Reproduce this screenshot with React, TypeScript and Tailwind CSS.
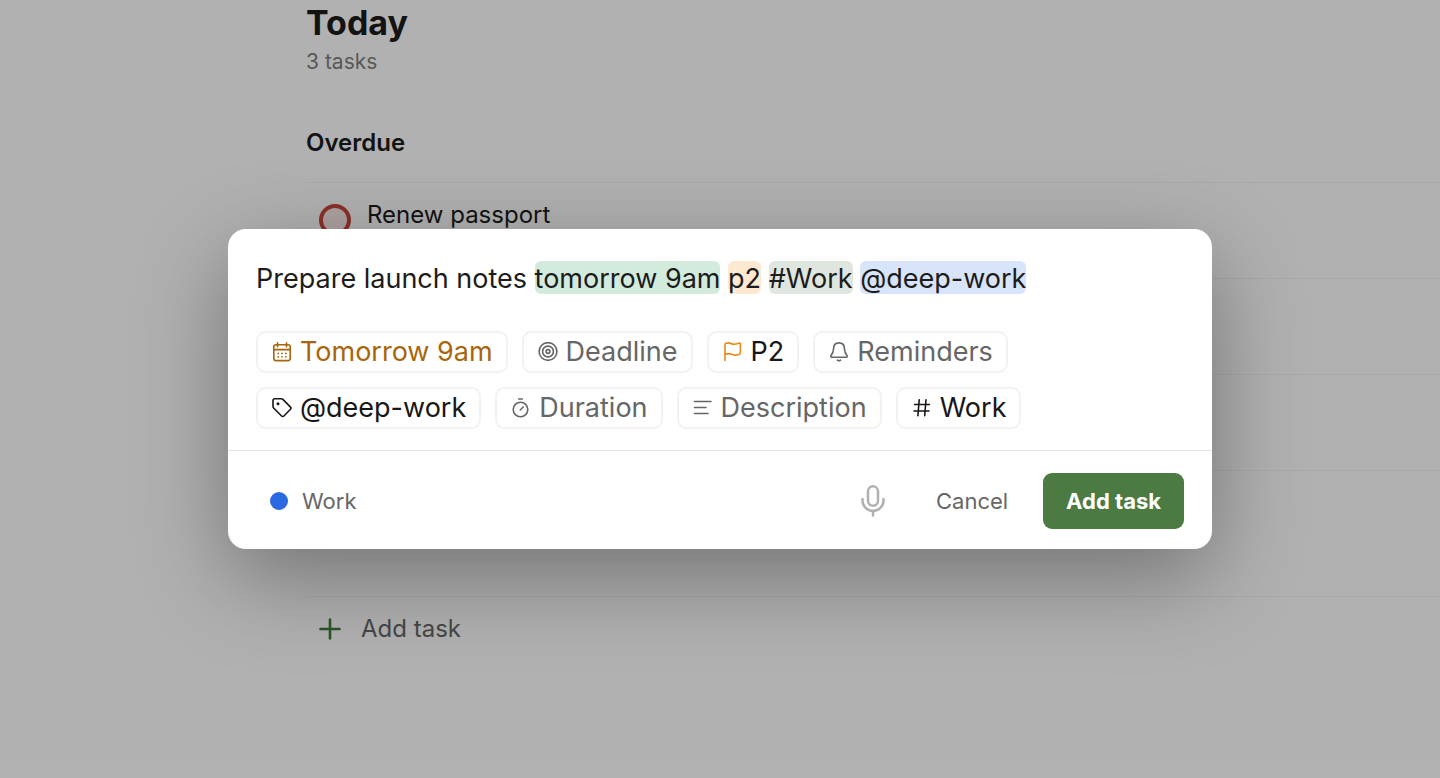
import { useState } from "react"
import type { ReactNode } from "react"
import clsx from "clsx"

type Token = { text: string; mark?: string }

const TOKENS: Token[] = [
  { text: "Prepare launch notes " },
  { text: "tomorrow 9am", mark: "bg-[#d3ebdc]" },
  { text: " " },
  { text: "p2", mark: "bg-[#fde9d2]" },
  { text: " " },
  { text: "#Work", mark: "bg-[#dfe6df]" },
  { text: " " },
  { text: "@deep-work", mark: "bg-[#d8e4fa]" },
]

const ROWS = [
  { title: "Renew passport", height: "h-24" },
  { title: "", height: "h-24" },
  { title: "", height: "h-24" },
  { title: "", height: "h-[126px]" },
]

export default function App() {
  return (
    <div className="relative min-h-screen overflow-hidden bg-[#fefefe] font-['Inter',sans-serif] text-[#1c1c1c]">
      <TodayList />
      <div className="absolute inset-0 flex items-center justify-center bg-black/30 px-8">
        <QuickAdd />
      </div>
    </div>
  )
}

function TodayList() {
  return (
    <main className="pl-[306px]">
      <h1 className="pt-0.5 text-[34px] leading-[42px] font-bold">Today</h1>
      <p className="mt-0.5 text-[21px] leading-8 text-[#808080]">3 tasks</p>
      <h2 className="mt-12 text-[24px] leading-[34px] font-semibold">Overdue</h2>
      <ul className="mt-[22px] border-t border-[#f2f2f2]">
        {ROWS.map((row, i) => (
          <li key={i} className={clsx("flex items-start gap-4 border-b border-[#f2f2f2] pt-4 pl-[13px]", row.height)}>
            {row.title && (
              <>
                <input type="checkbox" aria-label={row.title} className="mt-[5px] size-8 shrink-0 appearance-none rounded-full border-4 border-[#c9453c] bg-[#f9e8e7]" />
                <span className="text-[24px] leading-8">{row.title}</span>
              </>
            )}
          </li>
        ))}
      </ul>
      <button className="mt-4 flex items-center gap-5 pl-[13px] text-[24px] leading-8 text-[#666666]">
        <svg className="size-[22px] text-[#3f7a3a]" viewBox="0 0 22 22" fill="none" stroke="currentColor" strokeWidth="2.6" strokeLinecap="round">
          <path d="M11 1.5v19M1.5 11h19" />
        </svg>
        Add task
      </button>
    </main>
  )
}

function QuickAdd() {
  const [value, setValue] = useState(TOKENS.map((t) => t.text).join(""))
  const untouched = value === TOKENS.map((t) => t.text).join("")

  return (
    <form
      role="dialog"
      aria-label="Add task"
      onSubmit={(e) => e.preventDefault()}
      className="w-full max-w-[984px] rounded-[18px] bg-white shadow-[0_28px_90px_rgba(0,0,0,0.35)]"
    >
      <div className="px-7 pt-7 pb-[21px]">
        {/* the marks sit behind the input, with the same metrics */}
        <div className="relative h-[42px] text-[27px] leading-[42px]">
          <div aria-hidden="true" className="whitespace-pre text-transparent">
            {untouched && TOKENS.map((t, i) => <span key={i} className={clsx("rounded-[6px]", t.mark)}>{t.text}</span>)}
          </div>
          <input
            aria-label="Task name"
            value={value}
            onChange={(e) => setValue(e.target.value)}
            className="absolute inset-0 h-full w-full bg-transparent outline-none"
          />
        </div>

        <div className="mt-8 flex flex-wrap gap-3.5">
          <Chip label="Tomorrow 9am" tone="text-[#a9650b]"><CalendarIcon /></Chip>
          <Chip label="Deadline" tone="text-[#666666]"><TargetIcon /></Chip>
          <Chip label="P2" tone="text-[#171717]"><FlagIcon /></Chip>
          <Chip label="Reminders" tone="text-[#666666]"><BellIcon /></Chip>
          <Chip label="@deep-work" tone="text-[#171717]"><TagIcon /></Chip>
          <Chip label="Duration" tone="text-[#666666]"><TimerIcon /></Chip>
          <Chip label="Description" tone="text-[#666666]"><LinesIcon /></Chip>
          <Chip label="Work" tone="text-[#171717]"><HashIcon /></Chip>
        </div>
      </div>

      <div className="flex items-center border-t border-[#e4e4e4] px-7 pt-[22px] pb-5 text-[22px] leading-8">
        <button type="button" className="flex items-center gap-3.5 px-3.5 text-[#666666]">
          <span className="size-[18px] rounded-full bg-[#2b69e0]" />
          Work
        </button>
        <button type="button" aria-label="Dictate" className="ml-auto text-[#b0b0b0]">
          <svg className="h-8 w-6" viewBox="0 0 24 32" fill="none" stroke="currentColor" strokeWidth="2.5" strokeLinecap="round">
            <rect x="7" y="1.3" width="10" height="19.5" rx="5" />
            <path d="M1.5 14v1.500a10.500 10.300 0 0 0 21 0V14M12 26v4.600" />
          </svg>
        </button>
        <button type="button" className="ml-[51px] text-[#666666]">Cancel</button>
        <button type="submit" className="ml-[35px] h-14 rounded-[9px] bg-[#4c7a43] px-[23px] font-bold text-white">Add task</button>
      </div>
    </form>
  )
}

function Chip({ label, tone, children }: { label: string; tone: string; children: ReactNode }) {
  return (
    <button type="button" className={clsx("flex h-[42px] items-center gap-2 rounded-[9px] border-2 border-[#f2f2f2] pr-[13px] pl-3.5 text-[27px] leading-8", tone)}>
      {children}
      {label}
    </button>
  )
}

function Icon({ children, className }: { children: ReactNode; className?: string }) {
  return (
    <svg className={clsx("size-5 shrink-0", className)} viewBox="0 0 20 20" fill="none" stroke="currentColor" strokeWidth="1.6" strokeLinecap="round" strokeLinejoin="round">
      {children}
    </svg>
  )
}

function CalendarIcon() {
  return (
    <Icon>
      <rect x="1.8" y="2.8" width="16.4" height="15.8" rx="2" />
      <path d="M1.8 7.6h16.400M5.500.8v4M14.500.8v4" />
      <path d="M6.200 11.400h.01M10 11.400h.01M13.800 11.400h.01M6.200 14.800h.01M10 14.800h.01M13.800 14.800h.01" strokeWidth="1.8" />
    </Icon>
  )
}

function TargetIcon() {
  return (
    <Icon>
      <circle cx="10" cy="9.5" r="8.9" />
      <circle cx="10" cy="9.5" r="5.4" />
      <circle cx="10" cy="9.5" r="1.900" />
    </Icon>
  )
}

function FlagIcon() {
  return (
    <Icon className="text-[#e88a12]">
      <path d="M2 18.500V2.400C2.300 1.300 4 .9 5.600.9c1.800 0 2.900 1.400 5.400 1.400 2 0 3.300-.5 4.900-1.100.9-.3 1.500 0 1.500.8v8.700c0 .8-.3 1.200-1 1.500-1.600.6-3.200 1-5 .9-2.300-.1-3.700-1.600-6-1.500-1.300 0-2.400.2-3.400.7" />
    </Icon>
  )
}

function BellIcon() {
  return (
    <Icon>
      <path d="M10 .9C6.600.9 4.700 3.300 4.600 6.500c-.1 3.500-.8 5-2.500 6.900-.7.9-.3 1.800.8 1.800h14.200c1.100 0 1.500-.9.800-1.800-1.700-1.900-2.400-3.400-2.500-6.900C15.300 3.300 13.400.9 10 .9Z" />
      <path d="M8.400 18.200c.9.7 2.300.7 3.200 0" />
    </Icon>
  )
}

function TagIcon() {
  return (
    <Icon>
      <path d="M1 2.600C1 1.500 1.700.8 2.800.8h6.600c.6 0 1.100.2 1.500.6l7.600 7.700c.7.7.7 1.500 0 2.200l-6.600 6.700c-.7.700-1.600.7-2.300 0L1.600 10c-.4-.4-.6-.9-.6-1.400Z" />
      <circle cx="6" cy="5.800" r=".7" fill="currentColor" />
    </Icon>
  )
}

function TimerIcon() {
  return (
    <Icon>
      <circle cx="9.500" cy="11.500" r="7.300" />
      <path d="M7.700 1h3.600M9.200 12l3-3" />
    </Icon>
  )
}

function LinesIcon() {
  return (
    <Icon>
      <path d="M1.500 3.500h16.500M1.500 9.500h11.500M1.500 15.500h13.500" />
    </Icon>
  )
}

function HashIcon() {
  return (
    <Icon>
      <path d="M7.200 1.800 5.900 17.800M14 1.800l-1.300 16M2.500 6.500h15M2 13h15" />
    </Icon>
  )
}
